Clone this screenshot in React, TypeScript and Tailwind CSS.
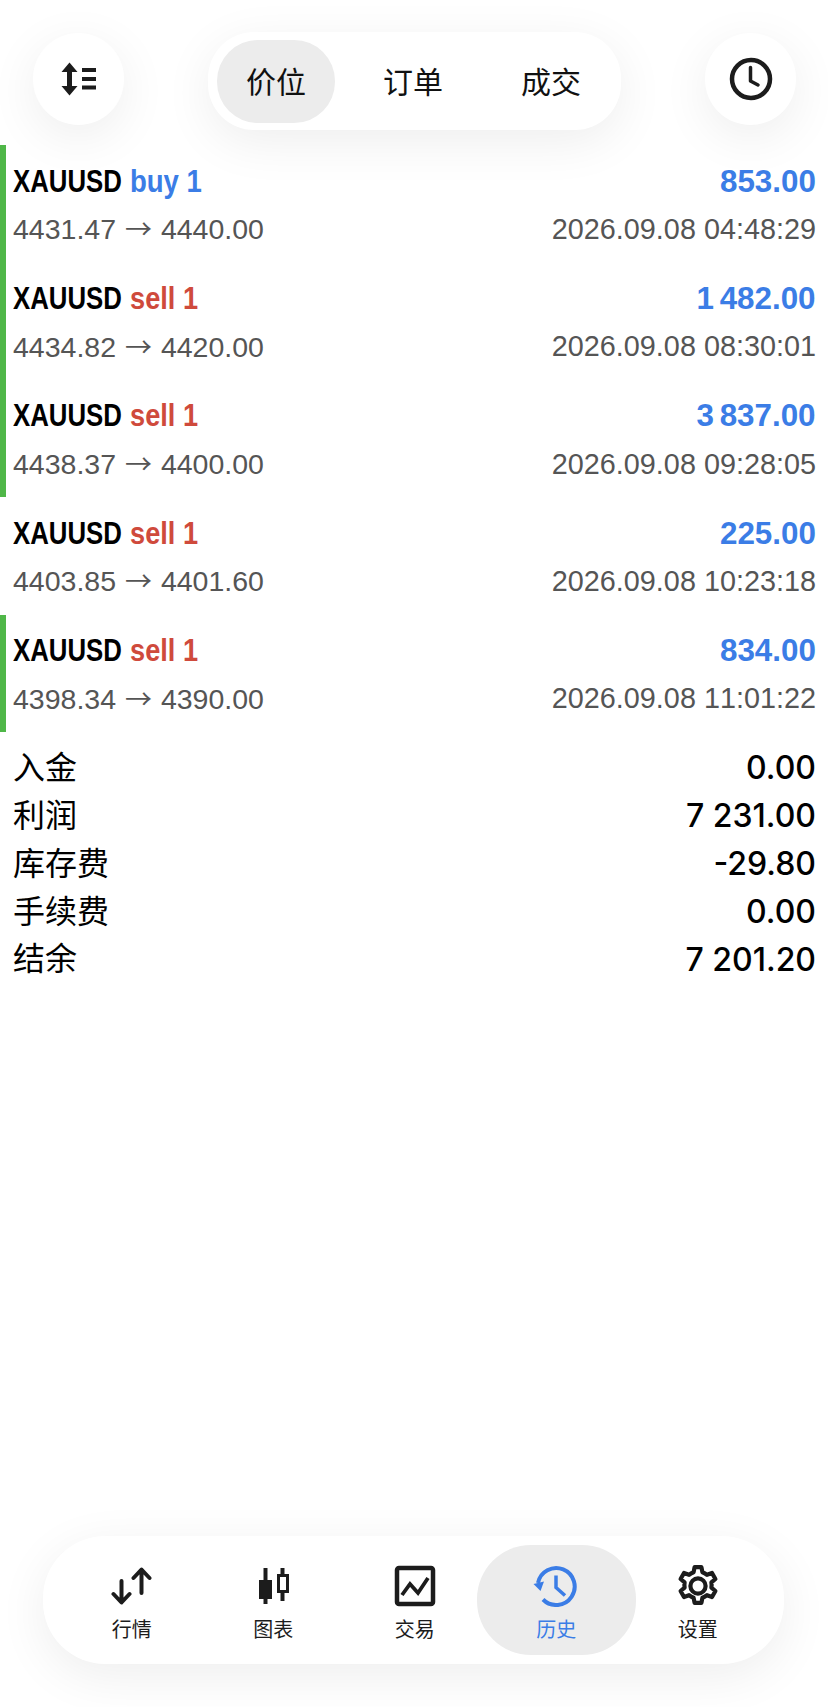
import React from "react";

const sans = "font-['Liberation_Sans',sans-serif]";
const cjk = "font-['Noto_Sans_CJK_SC',sans-serif]";

const rows = [
  { side: "buy 1", from: "4431.47", to: "4440.00", profit: "853.00", time: "2026.09.08 04:48:29", bar: true },
  { side: "sell 1", from: "4434.82", to: "4420.00", profit: "1 482.00", time: "2026.09.08 08:30:01", bar: true },
  { side: "sell 1", from: "4438.37", to: "4400.00", profit: "3 837.00", time: "2026.09.08 09:28:05", bar: true },
  { side: "sell 1", from: "4403.85", to: "4401.60", profit: "225.00", time: "2026.09.08 10:23:18", bar: false },
  { side: "sell 1", from: "4398.34", to: "4390.00", profit: "834.00", time: "2026.09.08 11:01:22", bar: true },
];

const summary = [
  ["入金", "0.00"],
  ["利润", "7 231.00"],
  ["库存费", "-29.80"],
  ["手续费", "0.00"],
  ["结余", "7 201.20"],
];

const ink = "#1c1c1c";
const blue = "#3b7de6";

function Sort() {
  return (
    <svg width="36" height="34" viewBox="0 0 36 34" fill="none">
      <path d="M8.500 0.500 L16.500 10 H11 V24 H16.500 L8.500 33.500 L0.500 24 H6 V10 H0.500 Z" fill={ink} />
      <path d="M21 8 H35 M21 17 H35 M21 25.500 H35" stroke={ink} strokeWidth="4" />
    </svg>
  );
}
function Clock() {
  return (
    <svg width="44" height="44" viewBox="0 0 44 44" fill="none">
      <circle cx="22" cy="22" r="19" stroke={ink} strokeWidth="4.500" />
      <path d="M21.500 10.500 V24 L29 28" stroke={ink} strokeWidth="3.500" strokeLinecap="round" strokeLinejoin="round" />
    </svg>
  );
}
function Quotes() {
  return (
    <svg width="42" height="38" viewBox="0 0 42 38" fill="none" stroke={ink} strokeWidth="4" strokeLinecap="round" strokeLinejoin="round">
      <path d="M10.500 14 V35 M2.500 27 L10.500 35.500 L18.500 27" />
      <path d="M30.500 26 V3 M22.500 11 L30.500 2.500 L38.500 11" />
    </svg>
  );
}
function Candles() {
  return (
    <svg width="36" height="38" viewBox="0 0 36 38" fill="none">
      <path d="M10.500 1 V37" stroke={ink} strokeWidth="4" />
      <rect x="4" y="13" width="13" height="19" fill={ink} />
      <path d="M27.500 1 V34" stroke={ink} strokeWidth="4" />
      <rect x="23.500" y="8.500" width="9" height="16" fill="#fff" stroke={ink} strokeWidth="3" />
    </svg>
  );
}
function Trade() {
  return (
    <svg width="42" height="42" viewBox="0 0 42 42" fill="none">
      <rect x="3" y="3" width="36" height="36" rx="2" stroke={ink} strokeWidth="4.500" />
      <path d="M8 30 L16 19 L24 28 L34 13" stroke={ink} strokeWidth="3.800" />
    </svg>
  );
}
function History() {
  return (
    <svg width="46" height="42" viewBox="0 0 46 42" fill="none">
      <path d="M5 18 A18.500 18.500 0 1 1 10 34.500" stroke={blue} strokeWidth="4" />
      <path d="M0.500 19 L11 16.500 L7.500 26 Z" fill={blue} />
      <path d="M23 10.500 V22.500 L32 30.500" stroke={blue} strokeWidth="3.500" />
    </svg>
  );
}
function Gear() {
  return (
    <svg width="42" height="42" viewBox="1.500 1.500 21 21" fill="none" stroke={ink} strokeWidth="2.100" strokeLinejoin="round">
      <path d="M10.300 2.600 h3.400 l.5 2.500 a7.800 7.800 0 0 1 2.300 1.300 l2.500 -.9 1.700 3 -2 1.700 a7.800 7.800 0 0 1 0 2.600 l2 1.700 -1.700 3 -2.500 -.9 a7.800 7.800 0 0 1 -2.300 1.300 l-.5 2.500 h-3.400 l-.5 -2.500 a7.800 7.800 0 0 1 -2.300 -1.300 l-2.500 .9 -1.700 -3 2 -1.700 a7.800 7.800 0 0 1 0 -2.600 l-2 -1.700 1.700 -3 2.500 .9 a7.800 7.800 0 0 1 2.300 -1.300 z" />
      <circle cx="12" cy="12" r="3.800" />
    </svg>
  );
}

const nav = [
  { label: "行情", icon: <Quotes /> },
  { label: "图表", icon: <Candles /> },
  { label: "交易", icon: <Trade /> },
  { label: "历史", icon: <History />, active: true },
  { label: "设置", icon: <Gear /> },
];

const softShadow = "shadow-[0_12px_50px_rgba(0,0,0,0.07)]";

export default function App() {
  return (
    <div className={`flex h-[1707px] w-[828px] flex-col overflow-hidden bg-white ${sans}`}>
      <header className="flex h-[145px] shrink-0 items-start gap-[84px] pl-[33px] pt-[32px]">
        <div className={`mt-px flex h-[92px] w-[91px] items-center justify-center rounded-full bg-white ${softShadow}`}>
          <Sort />
        </div>
        <div className={`flex h-[98px] w-[413px] items-center rounded-[46px] bg-white pl-[9px] ${softShadow} ${cjk} text-[30px] leading-none text-[#111]`}>
          <div className="flex h-[83px] w-[118px] items-center justify-center rounded-[41px] bg-[#ececec] pb-[2px]">价位</div>
          <div className="ml-[9px] flex w-[138px] justify-center pb-[2px]">订单</div>
          <div className="flex w-[138px] justify-center pb-[2px]">成交</div>
        </div>
        <div className={`mt-px flex h-[92px] w-[91px] items-center justify-center rounded-full bg-white ${softShadow}`}>
          <Clock />
        </div>
      </header>

      <main>
        {rows.map((r) => (
          <div
            key={r.time}
            className={`flex h-[117.400px] flex-col border-l-[6px] pl-[7px] pr-[12px] [font-kerning:none] ${r.bar ? "border-[#4fb748]" : "border-transparent"}`}
          >
            <div className="mt-[17px] flex h-[37px] items-center justify-between text-[32px] font-bold whitespace-nowrap">
              <div className="flex">
                <span className="w-[117px] origin-left scale-x-[0.806] text-black">XAUUSD</span>
                <span className={`origin-left ${r.side.startsWith("buy") ? "scale-x-[0.86] text-[#3b7de6]" : "scale-x-[0.85] text-[#cf4a3c]"}`}>{r.side}</span>
              </div>
              <span className="origin-right scale-x-[0.98] text-[#3b7de6] [word-spacing:-3px]">{r.profit}</span>
            </div>
            <div className="mt-[14px] flex h-[33px] items-center justify-between text-[28.500px] text-[#555]">
              <span>{r.from} <span className={`${cjk} mx-px text-[27px]`}>→</span> {r.to}</span>
              <span className="text-[28.800px]">{r.time}</span>
            </div>
          </div>
        ))}

        <div className="mt-[9px] pl-[13px] pr-[12px]">
          {summary.map(([k, v]) => (
            <div key={k} className="flex h-[47.900px] items-center justify-between text-[32px] text-black">
              <span className={cjk}>{k}</span>
              <span className="mt-[7px] font-['Inter',sans-serif] font-medium">{v}</span>
            </div>
          ))}
        </div>
      </main>

      <div className="mt-auto pb-[43px] pl-[43px] pr-[44px]">
        <nav className={`flex h-[128px] items-center rounded-[62px] bg-white pl-[18px] ${softShadow} ${cjk} text-[20px] text-[#1c1c1c]`}>
          {nav.map((n) => (
            <div
              key={n.label}
              className={`flex h-[110px] flex-col items-center pt-[20px] ${n.active ? "-mx-[9px] w-[159.500px] rounded-[54px] bg-[#ececec] text-[#3b7de6]" : "w-[141.500px]"}`}
            >
              <div className="flex h-[42px] items-center justify-center">{n.icon}</div>
              <span className="mt-[8px] leading-[28px]">{n.label}</span>
            </div>
          ))}
        </nav>
      </div>
    </div>
  );
}
